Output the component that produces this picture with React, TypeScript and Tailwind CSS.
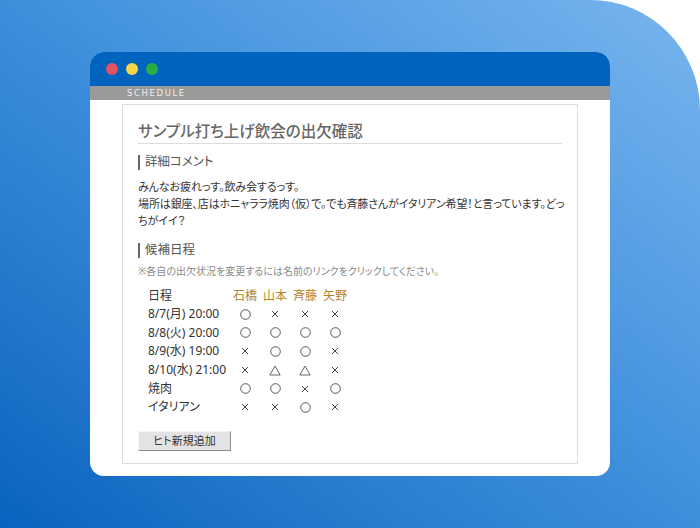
import React from "react";

type Mark = "o" | "x" | "t";

const members = ["石橋", "山本", "斉藤", "矢野"];

const rows: { label: string; marks: Mark[] }[] = [
  { label: "8/7(月) 20:00", marks: ["o", "x", "x", "x"] },
  { label: "8/8(火) 20:00", marks: ["o", "o", "o", "o"] },
  { label: "8/9(水) 19:00", marks: ["x", "o", "o", "x"] },
  { label: "8/10(水) 21:00", marks: ["x", "t", "t", "x"] },
  { label: "焼肉", marks: ["o", "o", "x", "o"] },
  { label: "イタリアン", marks: ["x", "x", "o", "x"] },
];

function MarkCell({ m }: { m: Mark }) {
  if (m === "o")
    return (
      <svg width="11" height="11" viewBox="0 0 11 11" className="mx-auto">
        <circle cx="5.5" cy="5.5" r="4.8" fill="none" stroke="#444" strokeWidth="0.9" />
      </svg>
    );
  if (m === "t")
    return (
      <svg width="12" height="11" viewBox="0 0 12 11" className="mx-auto">
        <path d="M6 1 L11.2 10 L0.8 10 Z" fill="none" stroke="#555" strokeWidth="0.9" />
      </svg>
    );
  return (
    <svg width="8" height="8" viewBox="0 0 8 8" className="mx-auto">
      <path d="M1 1 L7 7 M7 1 L1 7" stroke="#444" strokeWidth="1" />
    </svg>
  );
}

function SectionTitle({ children }: { children: React.ReactNode }) {
  return (
    <h3 className="flex items-center gap-[5px] text-[12.5px] leading-[16px] text-[#555]">
      <span className="w-[2px] h-[15px] bg-[#666]" />
      {children}
    </h3>
  );
}

export default function App() {
  return (
    <div
      className="w-[700px] h-[528px] overflow-hidden bg-white"
      style={{ fontFamily: '"Noto Sans", "Noto Sans CJK JP", sans-serif', fontFeatureSettings: '"palt"' }}
    >
      <div className="w-full h-full rounded-tr-[110px] bg-gradient-to-tr from-[#0663be] via-[#3d8fdc] to-[#78b6ee] pt-[52px] pl-[90px]">
        {/* window */}
        <div className="w-[520px] h-[424px] rounded-[14px] bg-white overflow-hidden flex flex-col">
          <div className="h-[34px] bg-[#0064be] flex items-center gap-[8px] pl-[16px] shrink-0">
            <span className="w-[12px] h-[12px] rounded-full bg-[#e4535f]" />
            <span className="w-[12px] h-[12px] rounded-full bg-[#f7d648]" />
            <span className="w-[12px] h-[12px] rounded-full bg-[#27b041]" />
          </div>
          <div className="h-[14px] bg-[#9a9a9a] flex items-center pl-[37px] shrink-0">
            <span className="text-[8.5px] leading-none tracking-[1.6px] text-[#eee]" style={{ fontFamily: '"DejaVu Sans", sans-serif' }}>
              SCHEDULE
            </span>
          </div>
          <div className="px-[32px] pt-[4px]">
            <div className="h-[360px] border border-[#dcdcdc] px-[15px] pt-[16px]">
              <h2 className="text-[15.5px] leading-[20px] font-medium text-[#666] pb-[2px] border-b border-[#dcdcdc]">
                サンプル打ち上げ飲会の出欠確認
              </h2>
              <div className="mt-[10px]">
                <SectionTitle>詳細コメント</SectionTitle>
              </div>
              <p className="mt-[8px] text-[11px] leading-[17px] tracking-[-0.12px] text-[#333] whitespace-nowrap">
                みんなお疲れっす。飲み会するっす。
                <br />
                場所は銀座、店はホニャララ焼肉（仮）で。でも斉藤さんがイタリアン希望！と言っています。どっ
                <br />
                ちがイイ？
              </p>
              <div className="mt-[13px]">
                <SectionTitle>候補日程</SectionTitle>
              </div>
              <p className="mt-[6px] text-[10px] leading-[14px] text-[#8a8a8a]">
                ※各自の出欠状況を変更するには名前のリンクをクリックしてください。
              </p>
              <table className="mt-[9px] ml-[10px] text-[12px] text-[#333] border-collapse">
                <thead>
                  <tr className="h-[18px]">
                    <th className="w-[82px] text-left font-normal">日程</th>
                    {members.map((m) => (
                      <th key={m} className="w-[30px] font-normal text-center text-[#b5852a]">
                        {m}
                      </th>
                    ))}
                  </tr>
                </thead>
                <tbody>
                  {rows.map((r) => (
                    <tr key={r.label} className="h-[18.6px]">
                      <td className="whitespace-nowrap">{r.label}</td>
                      {r.marks.map((m, i) => (
                        <td key={i} className="text-center align-middle">
                          <MarkCell m={m} />
                        </td>
                      ))}
                    </tr>
                  ))}
                </tbody>
              </table>
              <button className="mt-[14px] w-[93px] h-[20px] text-[11px] text-[#333] border border-t-[#f4f4f4] border-l-[#f4f4f4] border-r-[#8c8c8c] border-b-[#8c8c8c] bg-[#e3e3e3] leading-none">
                ヒト新規追加
              </button>
            </div>
          </div>
        </div>
      </div>
    </div>
  );
}
